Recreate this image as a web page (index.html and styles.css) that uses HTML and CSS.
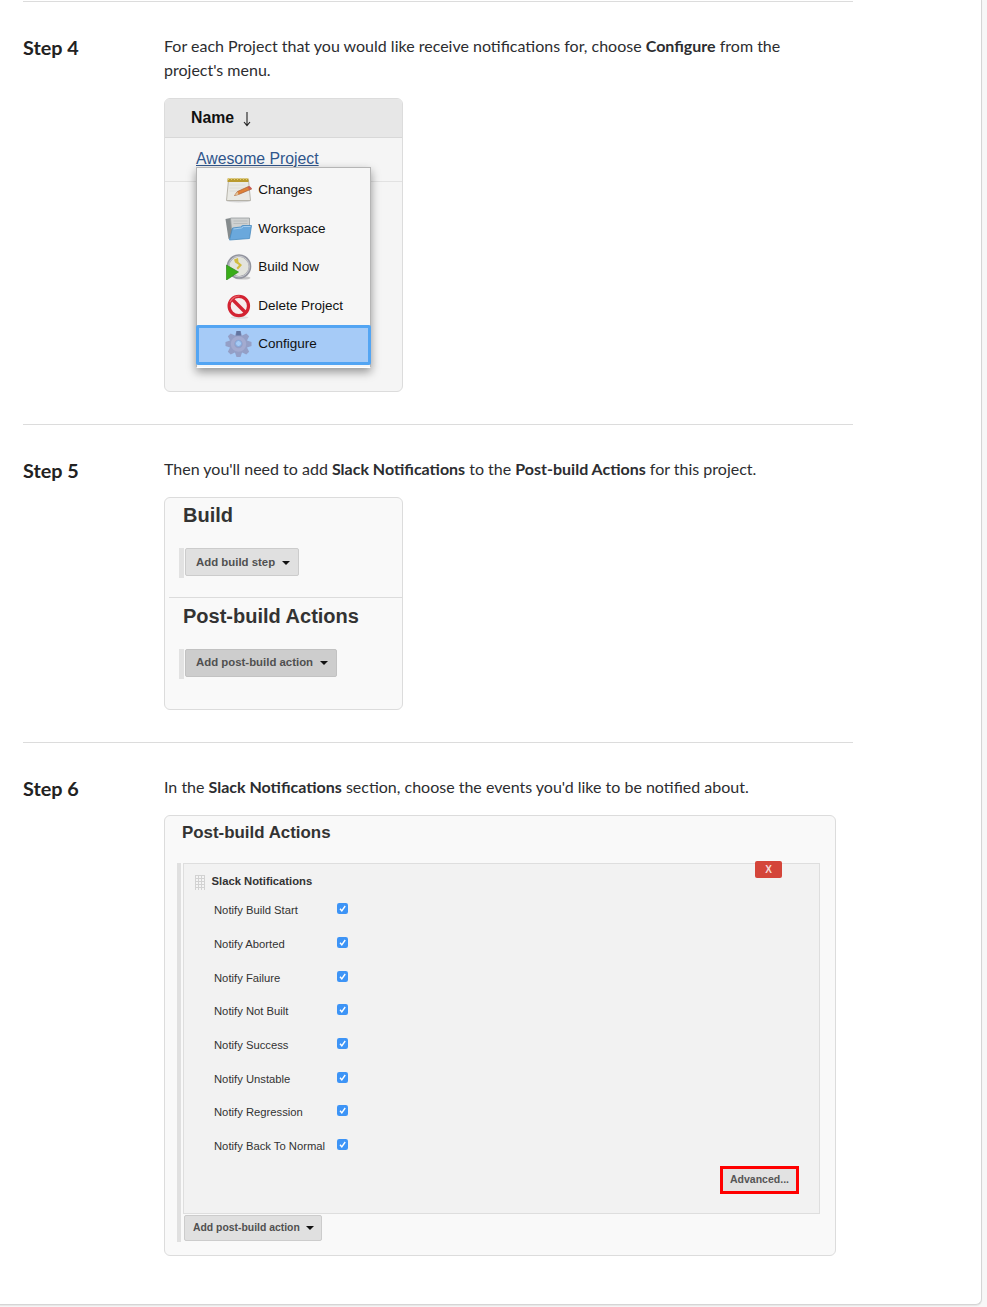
FILE: index.html
```html
<!DOCTYPE html>
<html lang="en">
<head>
<meta charset="utf-8">
<title>Jenkins setup instructions</title>
<link rel="stylesheet" href="styles.css">
</head>
<body>
<main class="card">
  <section class="step">
    <h2 class="step-title">Step 4</h2>
    <div class="step-body">
      <p class="copy">For each Project that you would like receive notifications for, choose <b>Configure</b> from the<br>project's menu.</p>
      <div class="panel jobs">
        <div class="jobs-head"><span class="jobs-name">Name</span>
          <svg class="sort" viewBox="0 0 10 16"><path d="M5 1V14.5M2 11L5 14.7L8 11" fill="none" stroke="#222" stroke-width="1.1"/></svg>
        </div>
        <div class="jobs-row"><a class="job-link">Awesome Project</a></div>
        <ul class="menu">
          <li class="item">
            <svg class="icon" viewBox="0 0 26 26"><ellipse cx="13" cy="24" rx="12" ry="1.5" fill="#d5d5d5"/><path d="M3 3H23L25 23.5H1Z" fill="#e9e9e4" stroke="#aaa69b" stroke-width=".8"/><path d="M2 1.5H23V5H2Z" fill="#b99a2e"/><path d="M3 1v2M6 1v2M9 1v2M12 1v2M15 1v2M18 1v2M21 1v2" stroke="#ddc86b"/><path d="M4 8H20M4 11H18M4 14H14" stroke="#dcdcd7"/><path d="M9 18.5L12 14.5L23 9.5L26 12L13 17.5Z" fill="#df8137" stroke="#a85b31" stroke-width=".7"/><path d="M22 10L24 9L26.5 11.5L24 13Z" fill="#c85d55"/><path d="M9 18.5L12 14.8L13 17.4Z" fill="#dfc49a"/></svg>
            <span>Changes</span></li>
          <li class="item">
            <svg class="icon" viewBox="0 0 26 26"><path d="M0 3L5 2L7 4V22L3 23Z" fill="#858b8d"/><path d="M5 2H24L24 13H6Z" fill="#cfd1d1" stroke="#989d9e" stroke-width=".8"/><path d="M8 5H22M8 7.5H22" stroke="#b9bdbd"/><path d="M7 12L15 11L17 9.5L26 9.5L24 22.5L4 24Z" fill="#6aa8dc" stroke="#478abf" stroke-width=".8"/><path d="M8 13L16 12L18 10.5L25 10.5" stroke="#a5cdef" fill="none"/></svg>
            <span>Workspace</span></li>
          <li class="item">
            <svg class="icon" viewBox="0 0 26 26"><ellipse cx="17" cy="24" rx="8" ry="1.6" fill="#c6c6c6"/><circle cx="13.5" cy="12.5" r="11" fill="#e3e4dd" stroke="#92949e" stroke-width="2.6"/><circle cx="13.5" cy="12.5" r="10.4" fill="none" stroke="#c9cad0"/><path d="M8.5 5.5L12.5 4L13 8L16.5 11L12.5 15.5L11 14L13.5 11L9.5 8.5Z" fill="#d2bc40"/><path d="M1 11L13 18L1 26Z" fill="#39ad18" stroke="#2c881a" stroke-width=".7"/></svg>
            <span>Build Now</span></li>
          <li class="item">
            <svg class="icon" viewBox="0 0 26 26"><ellipse cx="14" cy="24.5" rx="9" ry="1.4" fill="#dedede"/><circle cx="13.3" cy="13" r="9.7" fill="#f6ecec" stroke="#d32332" stroke-width="3.2"/><path d="M7 6.5L20 19.5" stroke="#d32332" stroke-width="3.4"/><path d="M4.5 9Q8 2.8 14 3" fill="none" stroke="#ec6a72" stroke-width="1.2"/></svg>
            <span>Delete Project</span></li>
          <li class="item selected">
            <svg class="icon" viewBox="0 0 26 26"><g fill="#949fc6"><circle cx="13" cy="13" r="9"/><g id="teeth"><path d="M11 0H15L17 6H9Z"/><path d="M11 26H15L17 20H9Z"/><path d="M0 11V15L6 17V9Z"/><path d="M26 11V15L20 17V9Z"/></g><use href="#teeth" transform="rotate(45 13 13)"/></g><circle cx="13" cy="13" r="6" fill="none" stroke="#a3abd0" stroke-width="3.5"/><circle cx="13" cy="12.5" r="3" fill="#a6cbf5" stroke="#84a9dc" stroke-width="1"/><path d="M11 0H15L15.5 4.5H10.5Z" fill="#6275a0"/></svg>
            <span>Configure</span></li>
        </ul>
      </div>
    </div>
  </section>

  <section class="step">
    <h2 class="step-title">Step 5</h2>
    <div class="step-body">
      <p class="copy">Then you'll need to add <b>Slack Notifications</b> to the <b>Post-build Actions</b> for this project.</p>
      <div class="panel config">
        <h3 class="config-title">Build</h3>
        <div class="chunk"><span class="btn">Add build step <i class="caret"></i></span></div>
        <h3 class="config-title second">Post-build Actions</h3>
        <div class="chunk"><span class="btn pressed">Add post-build action <i class="caret"></i></span></div>
      </div>
    </div>
  </section>

  <section class="step">
    <h2 class="step-title">Step 6</h2>
    <div class="step-body">
      <p class="copy">In the <b>Slack Notifications</b> section, choose the events you'd like to be notified about.</p>
      <div class="panel actions">
        <h3 class="actions-title">Post-build Actions</h3>
        <div class="list">
          <div class="box">
            <span class="close">X</span>
            <div class="box-head"><i class="grip"></i><b>Slack Notifications</b></div>
            <div class="row"><span class="label">Notify Build Start</span><svg class="check" viewBox="0 0 11 11"><rect width="11" height="11" rx="2.2"/><path d="M3 5.8L4.8 7.8L8.2 3"/></svg></div>
            <div class="row"><span class="label">Notify Aborted</span><svg class="check" viewBox="0 0 11 11"><rect width="11" height="11" rx="2.2"/><path d="M3 5.8L4.8 7.8L8.2 3"/></svg></div>
            <div class="row"><span class="label">Notify Failure</span><svg class="check" viewBox="0 0 11 11"><rect width="11" height="11" rx="2.2"/><path d="M3 5.8L4.8 7.8L8.2 3"/></svg></div>
            <div class="row"><span class="label">Notify Not Built</span><svg class="check" viewBox="0 0 11 11"><rect width="11" height="11" rx="2.2"/><path d="M3 5.8L4.8 7.8L8.2 3"/></svg></div>
            <div class="row"><span class="label">Notify Success</span><svg class="check" viewBox="0 0 11 11"><rect width="11" height="11" rx="2.2"/><path d="M3 5.8L4.8 7.8L8.2 3"/></svg></div>
            <div class="row"><span class="label">Notify Unstable</span><svg class="check" viewBox="0 0 11 11"><rect width="11" height="11" rx="2.2"/><path d="M3 5.8L4.8 7.8L8.2 3"/></svg></div>
            <div class="row"><span class="label">Notify Regression</span><svg class="check" viewBox="0 0 11 11"><rect width="11" height="11" rx="2.2"/><path d="M3 5.8L4.8 7.8L8.2 3"/></svg></div>
            <div class="row"><span class="label">Notify Back To Normal</span><svg class="check" viewBox="0 0 11 11"><rect width="11" height="11" rx="2.2"/><path d="M3 5.8L4.8 7.8L8.2 3"/></svg></div>
            <span class="advanced">Advanced...</span>
          </div>
          <span class="btn small">Add post-build action <i class="caret"></i></span>
        </div>
      </div>
    </div>
  </section>
</main>
</body>
</html>
```

FILE: styles.css
```css
* { box-sizing: border-box; }
body {
  margin: 0;
  height: 1307px;
  overflow: hidden;
  background: #f7f7f7;
  font-family: Lato, sans-serif;
  color: #2c2d30;
}
.card {
  width: 982px;
  height: 1305px;
  padding: 1px 0 0 23px;
  background: #fff;
  border: solid #d5d5d5;
  border-width: 0 1px 1px 0;
  border-radius: 0 0 6px 0;
  box-shadow: 0 1px 1px #e6e6e6;
}
.step {
  display: flex;
  width: 830px;
  padding: 32px 0;
  border-top: 1px solid #dcdcdc;
}
.step-title {
  flex: 0 0 141px;
  margin: 1px 0 0;
  font-size: 19.8px;
  line-height: 24px;
  font-weight: 700;
  color: #222;
}
.step-body { flex: 1; }
.copy {
  margin: 0 0 16px;
  font-size: 16px;
  line-height: 24px;
  white-space: nowrap;
}
.panel {
  position: relative;
  width: 239px;
  border: 1px solid #dcdcdc;
  border-radius: 6px;
  background: #f9f9f9;
  font-family: "Liberation Sans", Arial, sans-serif;
  color: #333;
}

.jobs { height: 294px; background: #f5f5f5; }
.jobs-head {
  display: flex;
  align-items: center;
  height: 39px;
  padding-left: 26px;
  gap: 8px;
  background: #e7e7e7;
  border-bottom: 1px solid #d8d8d8;
  border-radius: 5px 5px 0 0;
  font-weight: 700;
  font-size: 15.8px;
  color: #111;
}
.sort { width: 10px; height: 16px; margin-top: 2px; }
.jobs-row {
  height: 44px;
  padding: 11px 0 0 31px;
  border-bottom: 1px solid #e2e2e2;
  font-size: 15.8px;
  line-height: 20px;
}
.job-link { color: #30568c; text-decoration: underline; }
.menu {
  position: absolute;
  left: 31px;
  top: 68px;
  width: 175px;
  height: 201px;
  margin: 0;
  padding: 3px 0 0;
  list-style: none;
  background: #f6f6f6;
  border: 1px solid #b5b5b5;
  border-bottom-color: #fff;
  box-shadow: 0 4px 9px rgba(0, 0, 0, .4);
}
.item {
  display: flex;
  align-items: center;
  height: 38.5px;
  padding-left: 28px;
  gap: 6.3px;
  font-size: 13.5px;
  color: #111;
}
.item span { margin-top: -1px; }
.icon { width: 27px; height: 26px; }
.selected {
  height: 40px;
  margin: 0 -1px;
  padding: 0 0 2px 26px;
  background: #a6cbf7;
  border: 3px solid #53a5f3;
  border-radius: 2px;
}

.config { height: 213px; }
.config-title {
  margin: 0 0 0 4px;
  padding-left: 14px;
  font-size: 20px;
  line-height: 35px;
  height: 50px;
}
.config-title.second {
  height: 52px;
  margin-top: 19px;
  border-top: 1px solid #dcdcdc;
  line-height: 36px;
}
.chunk {
  height: 30px;
  margin-left: 14px;
  padding-left: 1px;
  border-left: 5px solid #e2e2e2;
}
.btn {
  display: inline-flex;
  align-items: center;
  height: 28px;
  padding: 0 8px 1px 10px;
  gap: 7px;
  background: #e0e0e0;
  border: 1px solid #ccc;
  border-radius: 2px;
  font-size: 11.4px;
  font-weight: 700;
  color: #505050;
  white-space: nowrap;
  vertical-align: top;
}
.pressed { background: #cdcdcd; border-color: #c2c2c2; padding-bottom: 2px; }
.caret {
  border: solid transparent;
  border-width: 4px 4px 0;
  border-top-color: #111;
  margin-top: 2px;
}

.actions { width: 672px; height: 441px; }
.actions-title {
  height: 47px;
  margin: 0 0 0 17px;
  font-size: 16.9px;
  line-height: 33px;
}
.list {
  height: 379px;
  margin-left: 12px;
  padding-left: 2px;
  border-left: 4px solid #e0e0e0;
}
.box {
  position: relative;
  width: 637px;
  height: 351px;
  margin-bottom: 1px;
  padding-top: 8px;
  background: #f2f2f2;
  border: 1px solid #dedede;
  font-size: 11.25px;
}
.close {
  position: absolute;
  left: 571px;
  top: -3px;
  width: 27px;
  height: 17px;
  border-radius: 2px;
  background: #d4453a;
  color: #f7d9d6;
  font-weight: 700;
  font-size: 10px;
  line-height: 17px;
  text-align: center;
}
.box-head {
  display: flex;
  align-items: center;
  height: 21px;
  padding-left: 11px;
  gap: 6.5px;
  font-size: 11.25px;
}
.box-head b { margin-top: -3px; }
.grip {
  width: 10px;
  height: 15px;
  background:
    repeating-linear-gradient(#d2d2d2 0 1px, transparent 1px 3px),
    repeating-linear-gradient(90deg, #d2d2d2 0 1px, #f4f4f4 1px 3px);
}
.row {
  display: flex;
  align-items: center;
  height: 33.7px;
  padding: 1px 0 0 30px;
}
.label { width: 122.5px; white-space: nowrap; }
.check { width: 11px; height: 11px; margin-top: -3px; }
.check rect { fill: #3d94f6; }
.check path { fill: none; stroke: #fff; stroke-width: 1.4; }
.advanced {
  display: block;
  width: 79px;
  height: 28px;
  margin: 3px 0 0 536px;
  border: 3px solid #f00;
  background: #e2e2e2;
  color: #555;
  font-weight: 700;
  font-size: 10.5px;
  line-height: 21px;
  text-align: center;
}
.small { height: 26px; padding: 0 7px 2px 8px; font-size: 10.4px; gap: 6px; margin-left: 1px; }
```
